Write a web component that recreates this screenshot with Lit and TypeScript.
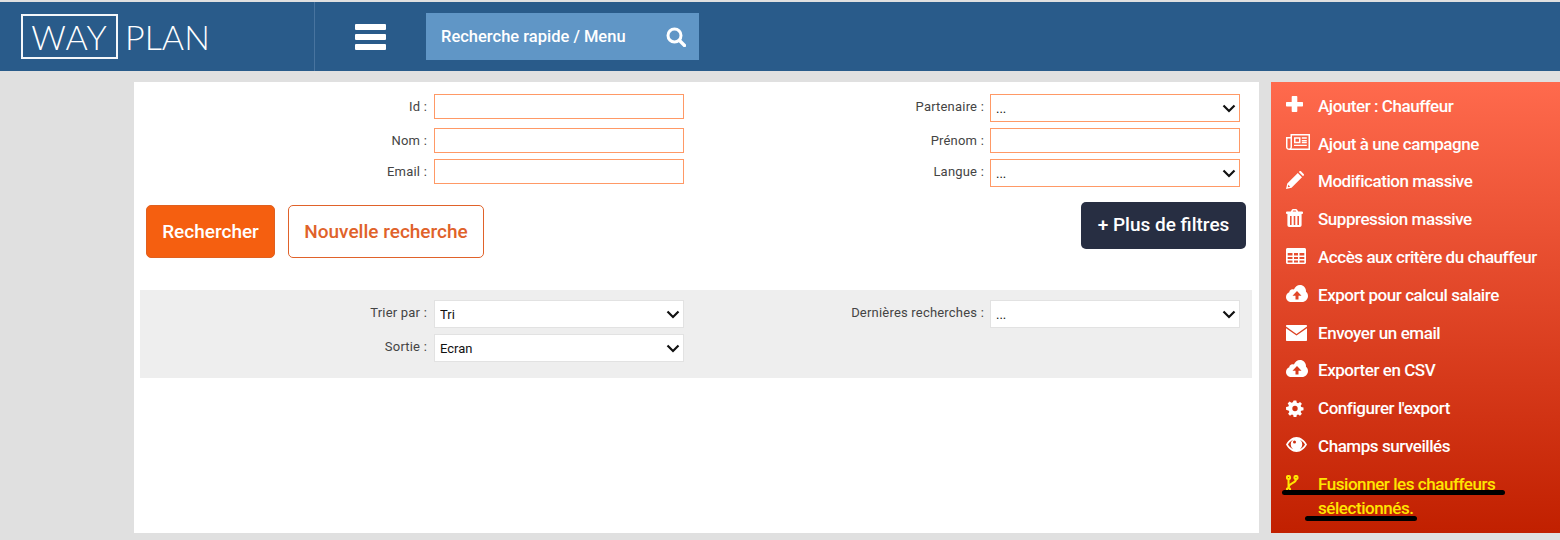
import { LitElement, html, css, svg } from "lit";
import { customElement } from "lit/decorators.js";

const chevron = html`<svg class="chev" viewBox="0 0 14 9" width="14" height="9"><path d="M1.5 1.5 7 7l5.500-5.500" fill="none" stroke="#111" stroke-width="2.2"/></svg>`;

const cloud = svg`<path fill-rule="evenodd" fill="#fff" d="M5 17C2.200 17 0 14.800 0 12c0-2.200 1.400-4 3.300-4.700C3.300 5.500 4.700 4.200 6.500 4.200c.5 0 1 .1 1.400.3C9 2 11.300 0 14 0c3.300 0 6 2.700 6 6 0 .3 0 .5-.1.8C21.200 7.700 22 9.300 22 11c0 3.300-2.700 6-6 6zM11 6 6.500 10.700h3v3.800h3v-3.800h3z"/>`;

const icons: Record<string, unknown> = {
  plus: svg`<path d="M6.500 0h4c.5 0 .8.300.8.800v5.200h5c.5 0 .7.300.7.800v2.900c0 .5-.2.800-.7.800h-5v4.700c0 .5-.3.800-.8.800h-4c-.5 0-.8-.3-.8-.8V10.500h-5c-.5 0-.7-.3-.7-.8V6.800c0-.5.200-.8.700-.8h5V.8c0-.5.300-.8.800-.8z" fill="#fff"/>`,
  news: svg`<path fill-rule="evenodd" fill="#fff" d="M4.500 0H24v16H3.500C1.500 16 0 14.800 0 13.200V3h4.500zM6 1.500V13c0 .6-.2 1.200-.5 1.500h17v-13zM1.500 4.500v8.700c0 .7.600 1.300 1.300 1.300s1.700-.6 1.700-1.300V4.500z"/><path fill="#fff" fill-rule="evenodd" d="M8 3.300h6.500v6H8zM9.500 4.800v3h3.500v-3z"/><path fill="#fff" d="M15.800 3.300h5v1.400h-5zM15.800 6h5v1.400h-5zM15.800 8h5v1.300h-5zM8 10.700h12.800v1.300H8z"/>`,
  pencil: svg`<path fill-rule="evenodd" fill="#fff" d="M1.300 12.500 11.800 2l4.200 4.200L5.500 16.700 0 18zM2.300 13.800 1.800 16.200l2.400-.5zM12.800 1l.7-.7c.5-.4 1.100-.4 1.500 0l2.700 2.700c.4.400.4 1 0 1.500l-.7.700z"/>`,
  trash: svg`<path fill-rule="evenodd" d="M4.800 2.500 6 .6C6.200.2 6.600 0 7 0h3c.4 0 .8.200 1 .6l1.200 1.900h3.800c.6 0 1 .3 1 .8v.9c0 .4-.4.700-1 .7h-.4V16c0 1.200-.8 2-1.800 2H3.200c-1 0-1.800-.8-1.800-2V4.900H1c-.6 0-1-.3-1-.7v-.9c0-.5.400-.8 1-.8zM6.700 2.500h3.600l-.6-1H7.300zM4 7v9h1.600V7zM7.700 7v9h1.600V7zM11.400 7v9H13V7z" fill="#fff"/>`,
  table: svg`<path fill-rule="evenodd" d="M1.500 0h17c.8 0 1.500.7 1.500 1.500v13c0 .8-.7 1.500-1.500 1.500h-17C.7 16 0 15.300 0 14.500v-13C0 .7.700 0 1.500 0zM1.700 5v2.500h4.800V5zm6.300 0v2.500h4V5zm5.500 0v2.500h4.800V5zM1.700 9v2h4.800V9zM8 9v2h4V9zm5.500 0v2h4.800V9zM1.700 12.500v2h4.800v-2zm6.300 0v2h4v-2zm5.500 0v2h4.800v-2z" fill="#fff"/>`,
  cloud,
  mail: svg`<path d="M1 0h19c.6 0 1 .4 1 1v.6L10.500 8.900 0 1.600V1c0-.6.4-1 1-1zM0 3.300l10.500 7.300L21 3.300V15c0 .6-.4 1-1 1H1c-.6 0-1-.4-1-1z" fill="#fff"/>`,
  cog: svg`<path fill-rule="evenodd" d="M7.500 0h3l.5 2.500 1.500.6 2.100-1.400 2.100 2.100-1.400 2.100.6 1.500 2.600.5v3l-2.600.5-.6 1.500 1.400 2.100-2.100 2.100-2.100-1.400-1.500.6-.5 2.600h-3l-.5-2.600-1.500-.6-2.100 1.400-2.100-2.100 1.400-2.100-.6-1.500L-1 10.400v-3l2.600-.5.6-1.500-1.400-2.100 2.100-2.100 2.100 1.400 1.500-.6zM9 6a3 3 0 1 0 0 6 3 3 0 0 0 0-6z" fill="#fff" transform="translate(1 .500)"/>`,
  eye: svg`<path fill-rule="evenodd" d="M0 7.500C2.300 3.200 6.200 0 10.500 0S18.700 3.200 21 7.500C18.700 11.800 14.800 15 10.500 15S2.300 11.800 0 7.500zM2 7.500c1.200 2 3 3.700 5 4.700a6 6 0 0 1 0-9.400c-2 1-3.800 2.700-5 4.700zm12-4.700a6 6 0 0 1 0 9.400c2-1 3.800-2.700 5-4.700-1.200-2-3-3.700-5-4.700zM8.500 3.500a1.500 1.500 0 1 0 0 3 1.500 1.500 0 0 0 0-3z" fill="#fff"/>`,
  fork: svg`<g fill="none" stroke="#ffe600" stroke-width="2"><circle cx="2.500" cy="2.500" r="1.600"/><circle cx="2.500" cy="14.500" r="1.600"/><circle cx="10" cy="2.500" r="1.600"/><path d="M2.500 4.500v8M10 4.500c0 4-7.500 3.500-7.500 8"/></g>`,
};

const menu: { icon: string; box: string; w: number; h: number; label: string; low?: boolean }[] = [
  { icon: "plus", box: "0 0 17 16", w: 17, h: 16, label: "Ajouter : Chauffeur" },
  { icon: "news", box: "0 0 24 16", w: 24, h: 16, label: "Ajout à une campagne" },
  { icon: "pencil", box: "0 0 18 18", w: 18, h: 18, label: "Modification massive" },
  { icon: "trash", box: "0 0 17 18", w: 17, h: 18, label: "Suppression massive" },
  { icon: "table", box: "0 0 20 16", w: 20, h: 16, label: "Accès aux critère du chauffeur" },
  { icon: "cloud", box: "0 0 22 17", w: 22, h: 17, label: "Export pour calcul salaire" },
  { icon: "mail", box: "0 0 21 16", w: 21, h: 16, label: "Envoyer un email", low: true },
  { icon: "cloud", box: "0 0 22 17", w: 22, h: 17, label: "Exporter en CSV" },
  { icon: "cog", box: "0 0 20 19", w: 18, h: 17, label: "Configurer l'export", low: true },
  { icon: "eye", box: "0 0 21 15", w: 21, h: 15, label: "Champs surveillés" },
];

@customElement("app-root")
export class AppRoot extends LitElement {
  static styles = css`
    :host {
      display: block;
      height: 540px;
      background: #e0e0e0;
      padding-top: 2px;
      box-sizing: border-box;
      overflow: hidden;
      font-family: "Roboto", "Noto Sans", sans-serif;
    }
    .topbar {
      height: 69px;
      background: #295b8a;
      display: flex;
      align-items: center;
    }
    .brand {
      width: 315px;
      height: 100%;
      box-sizing: border-box;
      border-right: 1px solid #48749f;
      padding-left: 21px;
      display: flex;
      align-items: center;
      font-family: "Lato", sans-serif;
      font-weight: 300;
      font-size: 34px;
      color: #fff;
    }
    .brand .way {
      width: 97px;
      height: 45px;
      box-sizing: border-box;
      border: 2px solid #f4f7fa;
      display: flex;
      align-items: center;
      justify-content: center;
      line-height: 1;
      letter-spacing: 1px;
    }
    .brand .plan {
      margin-left: 7px;
      line-height: 1;
    }
    .burger {
      margin-left: 40px;
      width: 31px;
      display: flex;
      flex-direction: column;
      gap: 4px;
    }
    .burger i {
      display: block;
      height: 6px;
      border-radius: 1px;
      background: #fff;
    }
    .quick {
      margin-left: 40px;
      width: 273px;
      height: 47px;
      box-sizing: border-box;
      padding: 0 13px 0 15px;
      background: #6096c6;
      color: #fff;
      display: flex;
      align-items: center;
      justify-content: space-between;
      font-size: 16.5px;
      font-weight: 500;
    }
    .body {
      display: flex;
      gap: 12px;
      padding: 11px 0 0 134px;
    }
    .main {
      width: 1125px;
      height: 451px;
      background: #fff;
      box-sizing: border-box;
      padding-top: 12px;
    }
    .form {
      display: grid;
      grid-template-columns: 300px 250px 306px 250px;
      grid-template-rows: 34px 31px 28px;
      font-size: 13px;
      color: #444;
    }
    .lbl {
      text-align: right;
      padding: 5px 7px 0 0;
      letter-spacing: 0.2px;
    }
    .lbl.r { padding-right: 6px; }
    .inp {
      width: 250px;
      height: 25px;
      box-sizing: border-box;
      border: 1px solid #ff9966;
      background: #fff;
      padding: 0 5px;
      margin: 0;
      display: block;
      border-radius: 0;
      outline: none;
    }
    .sel {
      position: relative;
      width: 250px;
      height: 28px;
    }
    .sel select {
      appearance: none;
      -webkit-appearance: none;
      width: 100%;
      height: 100%;
      box-sizing: border-box;
      border: 1px solid #ff9966;
      background: #fff;
      border-radius: 0;
      padding: 0 5px;
      font: 400 13px "Roboto", sans-serif;
      color: #111;
      outline: none;
    }
    .sel.soft select { border-color: #e2e2e2; }
    .chev {
      position: absolute;
      right: 4px;
      top: 10px;
      pointer-events: none;
    }
    .actions {
      display: flex;
      align-items: flex-start;
      margin-top: 15px;
      padding: 0 13px 0 12px;
    }
    .btn {
      box-sizing: border-box;
      border-radius: 5px;
      font: 500 19px "Roboto", sans-serif;
      display: flex;
      align-items: center;
      justify-content: center;
    }
    .btn.go {
      width: 129px;
      height: 53px;
      margin-top: 3px;
      background: #f55f10;
      border: 1px solid #e0601f;
      color: #fff;
    }
    .btn.reset {
      width: 196px;
      height: 53px;
      margin: 3px 0 0 13px;
      background: #fff;
      border: 1px solid #e0622a;
      color: #e0622a;
    }
    .btn.more {
      width: 165px;
      height: 47px;
      margin-left: auto;
      padding-bottom: 3px;
      background: #272e42;
      color: #fff;
      font-size: 19px;
    }
    .panel {
      margin: 32px 7px 0 6px;
      padding: 10px 0 16px;
      background: #eeeeee;
    }
    .panel .form {
      grid-template-columns: 294px 250px 306px 250px;
      grid-template-rows: 34px 28px;
    }
    .side {
      position: relative;
      width: 289px;
      height: 451px;
      box-sizing: border-box;
      padding-top: 5px;
      background: linear-gradient(#ff6a4d, #c12000);
    }
    .item {
      display: flex;
      height: 37.800px;
      align-items: center;
      color: #fff;
      font-size: 17px;
      font-weight: 500;
      letter-spacing: -0.45px;
    }
    .ico {
      width: 47px;
      padding: 0 0 3px 15px;
      box-sizing: border-box;
      display: flex;
      flex: none;
    }
    .ico.low { padding-bottom: 0; }
    .merge {
      display: flex;
      color: #ffe600;
      font-size: 17px;
      font-weight: 500;
      letter-spacing: -0.45px;
      line-height: 24px;
      padding-top: 7px;
    }
    .merge .ico { padding-top: 3px; }
    .merge .txt { width: 200px; }
    .mark {
      position: absolute;
      height: 5px;
      border-radius: 3px;
      background: #000;
    }
    .m1 { left: 11px; top: 408px; width: 223px; }
    .m2 { left: 34px; top: 434px; width: 112px; }
  `;

  private row(label: string, ctl: unknown, right = false) {
    return html`<div class="lbl ${right ? "r" : ""}">${label} :</div><div>${ctl}</div>`;
  }

  private sel(value: string, soft = false) {
    return html`<div class="sel ${soft ? "soft" : ""}"><select><option>${value}</option></select>${chevron}</div>`;
  }

  render() {
    const input = html`<input class="inp" type="text" />`;
    return html`
      <header class="topbar">
        <div class="brand"><span class="way">WAY</span><span class="plan">PLAN</span></div>
        <div class="burger"><i></i><i></i><i></i></div>
        <div class="quick">
          <span>Recherche rapide / Menu</span>
          <svg width="20" height="20" viewBox="0 0 20 20"><circle cx="8.500" cy="8.500" r="6.500" fill="none" stroke="#fff" stroke-width="3"/><path d="m13.500 13.500 5 5" stroke="#fff" stroke-width="3.400" stroke-linecap="round"/></svg>
        </div>
      </header>
      <div class="body">
        <main class="main">
          <div class="form">
            ${this.row("Id", input)}
            ${this.row("Partenaire", this.sel("..."), true)}
            ${this.row("Nom", input)}
            ${this.row("Prénom", input, true)}
            ${this.row("Email", input)}
            ${this.row("Langue", this.sel("..."), true)}
          </div>
          <div class="actions">
            <div class="btn go">Rechercher</div>
            <div class="btn reset">Nouvelle recherche</div>
            <div class="btn more">+ Plus de filtres</div>
          </div>
          <div class="panel">
            <div class="form">
              ${this.row("Trier par", this.sel("Tri", true))}
              ${this.row("Dernières recherches", this.sel("...", true), true)}
              ${this.row("Sortie", this.sel("Ecran", true))}
            </div>
          </div>
        </main>
        <aside class="side">
          ${menu.map(
            (m) => html`<div class="item">
              <span class="ico ${m.low ? "low" : ""}"><svg width=${m.w} height=${m.h} viewBox=${m.box}>${icons[m.icon]}</svg></span>
              <span>${m.label}</span>
            </div>`
          )}
          <div class="merge">
            <span class="ico"><svg width="13" height="17" viewBox="0 0 13 17">${icons.fork}</svg></span>
            <span class="txt">Fusionner les chauffeurs sélectionnés.</span>
          </div>
          <i class="mark m1"></i>
          <i class="mark m2"></i>
        </aside>
      </div>
    `;
  }
}
